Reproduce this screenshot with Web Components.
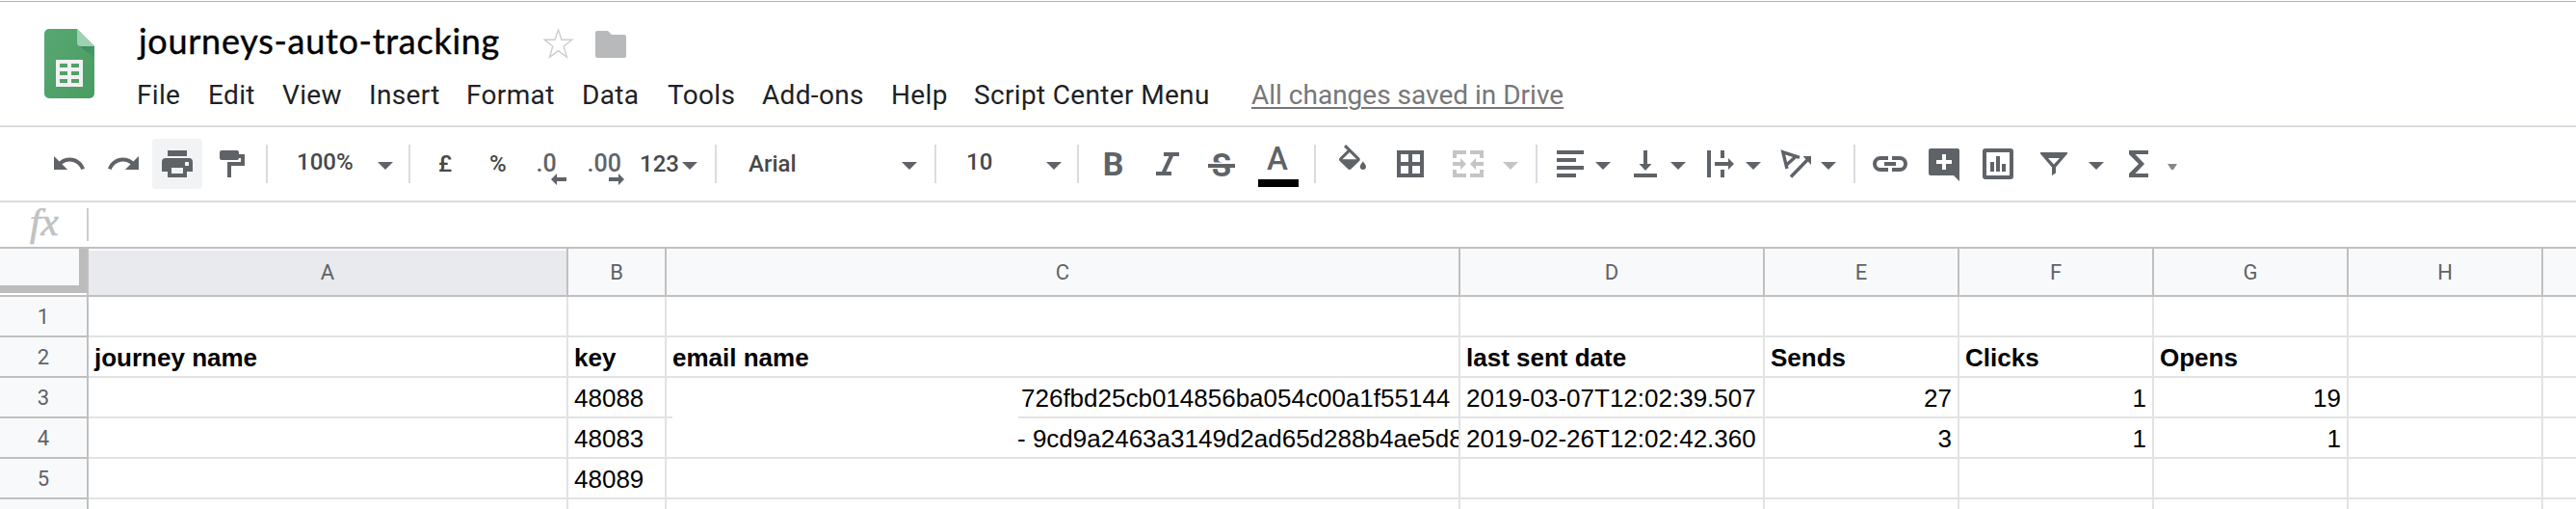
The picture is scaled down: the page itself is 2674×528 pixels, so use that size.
<!DOCTYPE html>
<html lang="en">
<head>
<meta charset="utf-8">
<title>journeys-auto-tracking</title>
<style>
html,body{margin:0;padding:0;background:#fff;overflow:hidden}
body{width:2674px;height:528px;font-family:Roboto,"Liberation Sans",sans-serif}
</style>
</head>
<body>
<sheet-app></sheet-app>
<script>
const define = (name, html, setup) => customElements.define(name, class extends HTMLElement {
  connectedCallback() {
    if (this.shadowRoot) return;
    const t = document.createElement('template');
    t.innerHTML = typeof html === 'function' ? html(this) : html;
    this.attachShadow({mode: 'open'}).append(t.content.cloneNode(true));
    if (setup) setup(this);
  }
});

const UNDO = 'M12.5 8c-2.65 0-5.05.99-6.9 2.6L2 7v9h9l-3.62-3.62c1.39-1.16 3.16-1.88 5.12-1.88 3.54 0 6.55 2.31 7.6 5.5l2.37-.78C21.08 11.03 17.15 8 12.5 8z';
const LETTER = 'font-family="Roboto" text-anchor="middle"';
// Each icon: [width, markup]; all share a 40px tall box.
const ICONS = {
  undo: [32, `<path transform="translate(-3.13 1.11) scale(1.563 1.556)" d="${UNDO}"/>`],
  redo: [32, `<path transform="translate(35.13 1.11) scale(-1.563 1.556)" d="${UNDO}"/>`],
  print: [32, '<path fill-rule="evenodd" d="M6 6h20v6H6zM4 14h24a4 4 0 0 1 4 4v10h-6v6H6v-6H0V18a4 4 0 0 1 4-4zM10 24v6h12v-6zM24 18v4h4v-4z"/>'],
  paint: [26, '<path d="M2 6h16a2 2 0 0 1 2 2v2h6v12H12v12H8V18h14v-4h-2a2 2 0 0 1-2 2H2a2 2 0 0 1-2-2V8a2 2 0 0 1 2-2z"/>'],
  caret: [16, '<path d="M0 18h16l-8 8z"/>'],
  minicaret: [10, '<path fill="#85888b" d="M0 20h10l-4 6H4z"/>'],
  dec0: [30, '<text x="-1.5" y="28" font-family="Roboto" font-weight="500" font-size="25">.0</text><path d="M14 36l6-6v4h10v4H20v4z"/>'],
  dec00: [37, '<text x="-1.5" y="28" font-family="Roboto" font-weight="500" font-size="25">.00</text><path d="M37 36l-6-6v4H21v4h10v4z"/>'],
  bold: [20, `<text x="9.500" y="32" ${LETTER} font-weight="700" font-size="34">B</text>`],
  italic: [24, '<path d="M8 8h16v4h-6l-7.5 16H16v4H0v-4h6l7.5-16H8z"/>'],
  strike: [28, `<text x="14" y="32.500" ${LETTER} font-weight="700" font-size="33">S</text><path fill="#fff" d="M4 18.500h14v1.500H4z"/><path d="M0 20h28v4H0z"/>`],
  color: [42, `<text x="20" y="26" ${LETTER} font-weight="500" font-size="33">A</text><path fill="#000" d="M0 36h42v8H0z"/>`],
  fill: [28, '<path transform="translate(-4.67 0) scale(1.556 1.53)" d="M16.56 8.94L7.62 0 6.21 1.41l2.38 2.38-5.15 5.15c-.59.59-.59 1.54 0 2.12l5.5 5.5c.29.29.68.44 1.06.44s.77-.15 1.06-.44l5.5-5.5c.59-.58.59-1.53 0-2.12zM5.21 10L10 5.21 14.79 10H5.21zM19 11.5s-2 2.17-2 3.5c0 1.1.9 2 2 2s2-.9 2-2c0-1.33-2-3.5-2-3.5z"/>'],
  borders: [28, '<path fill-rule="evenodd" d="M0 6h28v28H0zM4 10v8h8v-8zM16 10v8h8v-8zM4 22v8h8v-8zM16 22v8h8v-8z"/>'],
  merge: [32, '<path d="M0 6h14v4H4v4H0zM18 6h14v8h-4v-4H18zM0 26h4v4h10v4H0zM28 26h4v8H18v-4h10zM0 18h8v-4l6 6-6 6v-4H0zM32 18h-8v-4l-6 6 6 6v-4h8z"/>'],
  align: [28, '<path d="M0 6h28v4H0zM0 14h20v4H0zM0 22h28v4H0zM0 30h20v4H0z"/>'],
  valign: [24, '<path d="M10 6h4v14h4.500L12 27l-6.500-7H10zM0 30h24v4H0z"/>'],
  wrap: [28, '<path d="M0 6h4v28H0zM14 6h4v8h-4zM14 26h4v8h-4zM8 18h14v-4l6 6-6 6v-4H8z"/>'],
  rotate: [32, '<path fill="none" stroke="currentColor" stroke-width="3.400" d="M19 13.300L1.800 7.800 6 25M15 12.500L5.500 21M10 33.500L28 15"/><path d="M22.500 12H31v9z"/>'],
  link: [36, '<path fill="none" stroke="currentColor" stroke-width="4" d="M16 14H8a6 6 0 0 0 0 12h8M20 14h8a6 6 0 0 1 0 12h-8M12 20h12"/>'],
  comment: [32, '<path fill-rule="evenodd" d="M2 4h28a2 2 0 0 1 2 2v32l-6-6H2a2 2 0 0 1-2-2V6a2 2 0 0 1 2-2zM14 10v6H8v4h6v6h4v-6h6v-4h-6v-6z"/>'],
  chart: [32, '<path fill-rule="evenodd" d="M3 4h26a3 3 0 0 1 3 3v26a3 3 0 0 1-3 3H3a3 3 0 0 1-3-3V7a3 3 0 0 1 3-3zM4 8v24h24V8z"/><path d="M8 18h4v10H8zM14 12h4v16h-4zM20 20h4v8h-4z"/>'],
  filter: [28, '<path fill-rule="evenodd" d="M0 8h28v1.500L16 23.500v6L12 32v-8.500L0 9.500zM8 14l6 6.500 6-6.500z"/>'],
  sigma: [20, '<path d="M0 6h20v4H6.500L16 20l-9.500 10H20v4H0v-4l10-10L0 10z"/>']
};

define('tool-icon', el => {
  const [w, body] = ICONS[el.getAttribute('name')];
  return `<style>:host{display:block;flex:none;width:${w}px;height:40px;color:#5f6368}
  :host([disabled]){color:#c3c5c7}
  svg{display:block;overflow:visible;fill:currentColor}</style>
  <svg width="${w}" height="40" viewBox="0 0 ${w} 40">${body}</svg>`;
});

define('tool-text', `<style>:host{display:block;flex:none;box-sizing:border-box;height:40px;font:500 24px/40px Roboto,sans-serif;color:#484848;white-space:nowrap}
:host([raised]){line-height:37px}</style><slot></slot>`);

define('tool-divider', `<style>:host{display:block;flex:none;width:2px;height:40px;background:#dadce0}</style>`);

define('tool-bar', `<style>
:host{display:flex;align-items:center;box-sizing:border-box;height:80px;padding-left:56px;border-top:2px solid #dadce0;border-bottom:2px solid #dadce0}
.g{display:flex;align-items:center;flex:none}
.hot{width:52px;height:52px;border-radius:4px;background:#f1f3f4;display:flex;align-items:center;justify-content:center;margin:0 18px 0 14px}
</style>
<div class="g" style="gap:24px"><tool-icon name="undo"></tool-icon><tool-icon name="redo"></tool-icon></div>
<div class="hot"><tool-icon name="print"></tool-icon></div>
<tool-icon name="paint"></tool-icon>
<tool-divider style="margin-left:22px"></tool-divider>
<tool-text raised style="margin-left:30px;width:84px">100%</tool-text>
<tool-icon name="caret"></tool-icon>
<tool-divider style="margin:0 29px 0 16px"></tool-divider>
<tool-text style="width:53px">£</tool-text>
<tool-text style="width:50px">%</tool-text>
<tool-icon name="dec0"></tool-icon>
<tool-icon name="dec00" style="margin-left:23px"></tool-icon>
<tool-text style="margin-left:16px;width:44px">123</tool-text>
<tool-icon name="caret"></tool-icon>
<tool-divider style="margin-left:18px"></tool-divider>
<tool-text style="margin-left:33px;width:159px">Arial</tool-text>
<tool-icon name="caret"></tool-icon>
<tool-divider style="margin-left:18px"></tool-divider>
<tool-text raised style="margin-left:31px;width:83px">10</tool-text>
<tool-icon name="caret"></tool-icon>
<tool-divider style="margin:0 26px 0 16px"></tool-divider>
<tool-icon name="bold"></tool-icon>
<tool-icon name="italic" style="margin-left:34px"></tool-icon>
<tool-icon name="strike" style="margin-left:30px"></tool-icon>
<tool-icon name="color" style="margin-left:24px"></tool-icon>
<tool-divider style="margin:0 24px 0 16px"></tool-divider>
<div class="g" style="gap:32px"><tool-icon name="fill"></tool-icon><tool-icon name="borders"></tool-icon></div>
<tool-icon name="merge" disabled style="margin:0 20px 0 30px"></tool-icon>
<tool-icon name="caret" disabled></tool-icon>
<tool-divider style="margin:0 20px 0 18px"></tool-divider>
<tool-icon name="align" style="margin-right:12px"></tool-icon><tool-icon name="caret"></tool-icon>
<tool-icon name="valign" style="margin:0 14px 0 24px"></tool-icon><tool-icon name="caret"></tool-icon>
<tool-icon name="wrap" style="margin:0 12px 0 22px"></tool-icon><tool-icon name="caret"></tool-icon>
<tool-icon name="rotate" style="margin:0 9px 0 21px"></tool-icon><tool-icon name="caret"></tool-icon>
<tool-divider style="margin:0 18px"></tool-divider>
<tool-icon name="link"></tool-icon>
<tool-icon name="comment" style="margin-left:22px"></tool-icon>
<tool-icon name="chart" style="margin-left:24px"></tool-icon>
<tool-icon name="filter" style="margin:0 22px 0 28px"></tool-icon><tool-icon name="caret"></tool-icon>
<tool-icon name="sigma" style="margin:0 20px 0 26px"></tool-icon><tool-icon name="minicaret"></tool-icon>`);

define('sheets-logo', `<style>:host{display:block;width:52px;height:72px}svg{display:block}</style>
<svg width="52" height="72" viewBox="0 0 52 72">
<defs><linearGradient id="b" x1="0" y1="0" x2="1" y2="1"><stop offset="0" stop-color="#57a773"/><stop offset="1" stop-color="#4a9d61"/></linearGradient>
<linearGradient id="s" x1="0" y1="0" x2="1" y2="1"><stop offset="0" stop-color="#3b8a5c"/><stop offset="1" stop-color="#4b9d66"/></linearGradient></defs>
<path fill="url(#b)" d="M5 0h29l18 18v49a5 5 0 0 1-5 5H5a5 5 0 0 1-5-5V5a5 5 0 0 1 5-5z"/>
<path fill="url(#s)" d="M35.500 16.500L52 31V18z"/>
<path fill="#a0d0b4" d="M34 0l18 18H38a4 4 0 0 1-4-4z"/>
<path fill="#f1f1f1" fill-rule="evenodd" d="M12 32h28v28H12zM16 36v4h8v-4zM28 36v4h8v-4zM16 44v4h8v-4zM28 44v4h8v-4zM16 52v4h8v-4zM28 52v4h8v-4z"/>
</svg>`);

define('doc-header', `<style>
:host{display:flex;box-sizing:border-box;height:130px;padding-left:46px;background:linear-gradient(#b3b3b3,#b3b3b3) 0 1px/100% 1px no-repeat}
sheets-logo{margin-top:30px}
.col{margin-left:44px;padding-top:20px}
.title{display:flex;align-items:center;height:44px}
h1{box-sizing:border-box;margin:0;width:422px;padding-left:2px;font:400 36px/43px Lato,sans-serif;letter-spacing:.72px;color:#000;-webkit-text-stroke:.4px #000;white-space:nowrap}
svg{display:block;flex:none}
nav{display:grid;margin-top:15px;grid-template-columns:74px 77px 90px 101px 120px 89px 98px 134px 86px 288px auto;font:400 28px/40px Roboto,sans-serif;color:#202124;white-space:nowrap;letter-spacing:.34px}
.saved{color:#777;letter-spacing:0;text-decoration:underline;text-decoration-thickness:2px;text-underline-offset:3px}
</style>
<sheets-logo></sheets-logo>
<div class="col">
<div class="title"><h1>journeys-auto-tracking</h1>
<svg width="32" height="32" viewBox="0 0 32 32" style="margin-top:5px"><path fill="none" stroke="#cdcdcd" stroke-width="1.400" d="M15.500 2l3.500 10.200h10.800l-8.600 6.700 3.300 11.400L15.500 23.700l-9 6.600 3.300-11.400-8.600-6.700H12z"/></svg>
<svg width="32" height="28" viewBox="0 0 32 28" style="margin:8px 0 0 22px"><path fill="#b7b9bb" d="M2 0h11l4 4h13a2 2 0 0 1 2 2v20a2 2 0 0 1-2 2H2a2 2 0 0 1-2-2V2a2 2 0 0 1 2-2z"/></svg>
</div>
<nav><span>File</span><span>Edit</span><span>View</span><span>Insert</span><span>Format</span><span>Data</span><span>Tools</span><span>Add-ons</span><span>Help</span><span>Script Center Menu</span><span class="saved">All changes saved in Drive</span></nav>
</div>`);

define('formula-bar', `<style>
:host{display:flex;align-items:flex-start;box-sizing:border-box;height:48px;border-bottom:2px solid #c0c0c0}
i{box-sizing:border-box;width:90px;padding-left:31px;font:italic 41px/40px "Liberation Serif",serif;color:#c0c2c4;-webkit-text-stroke:.7px #c0c2c4}
b{width:2px;height:34px;margin-top:6px;background:#ccc}
</style><i>fx</i><b></b>`);

define('grid-cell', `<style>
:host{display:flex;box-sizing:border-box;align-items:center;overflow:hidden;min-width:0;padding:2px 6px 0 6px;border-right:2px solid #e2e3e3;border-bottom:2px solid #e2e3e3;font:26px/36px "Liberation Sans",Arial,sans-serif;color:#000;white-space:pre}
:host([bold]){font-weight:700}
:host([num]){justify-content:flex-end}
:host([head]){font:22px/36px Roboto,sans-serif;color:#5f6368;background:#f8f9fa;border-color:#c0c0c0;justify-content:center;padding:2px 0 0}
:host([top]){border-right-color:transparent;border-image:linear-gradient(#f8f9fa 2px,#c0c0c0 2px) 2}
:host([selected]){background:linear-gradient(#f8f9fa 2px,#e8eaed 2px)}
:host([corner]){padding:0;border-color:#c0c0c0;background:#fff}
.c{display:none}
:host([corner]) .c{display:block;align-self:flex-start;box-sizing:border-box;flex:none;width:90px;height:46px;background:#f8f9fa;border-right:8px solid #bcbcbc;border-bottom:8px solid #bcbcbc}
</style><div class="c"></div><slot></slot>`);

define('sheet-grid', `<style>
:host{display:grid;grid-template-columns:92px 498px 102px 824px 316px 202px 202px 202px 202px 202px;grid-template-rows:50px repeat(6,42px);width:2842px}
.blank{position:absolute;left:698px;top:430px;width:359px;height:5px;background:#fff}
</style>`, el => {
  const heads = ['A','B','C','D','E','F','G','H',''];
  const rows = [
    [],
    ['journey name','key','email name','last sent date','Sends','Clicks','Opens'],
    ['','48088','726fbd25cb014856ba054c00a1f55144','2019-03-07T12:02:39.507','27','1','19'],
    ['','48083','- 9cd9a2463a3149d2ad65d288b4ae5d8','2019-02-26T12:02:42.360','3','1','1'],
    ['','48089'],
    []
  ];
  const add = (text, attrs, pad) => {
    const c = document.createElement('grid-cell');
    attrs.forEach(a => c.setAttribute(a, ''));
    c.textContent = text;
    if (pad) c.style.paddingLeft = pad;
    el.shadowRoot.append(c);
  };
  add('', ['corner', 'top']);
  heads.forEach((h, i) => add(h, i ? ['head', 'top'] : ['head', 'top', 'selected']));
  rows.forEach((r, n) => {
    add(n < 5 ? String(n + 1) : '', ['head']);
    heads.forEach((_, i) => {
      const attrs = n === 1 ? ['bold'] : i > 3 ? ['num'] : [];
      add(r[i] || '', attrs, i === 2 && n === 2 ? '368px' : i === 2 && n === 3 ? '364px' : '');
    });
  });
  const blank = document.createElement('div');
  blank.className = 'blank';
  el.shadowRoot.append(blank);
});

define('sheet-app', `<style>:host{display:block;width:2674px;height:528px;overflow:hidden;position:relative;background:#fff}</style>
<doc-header></doc-header><tool-bar></tool-bar><formula-bar></formula-bar><sheet-grid></sheet-grid>`);
</script>
</body>
</html>
